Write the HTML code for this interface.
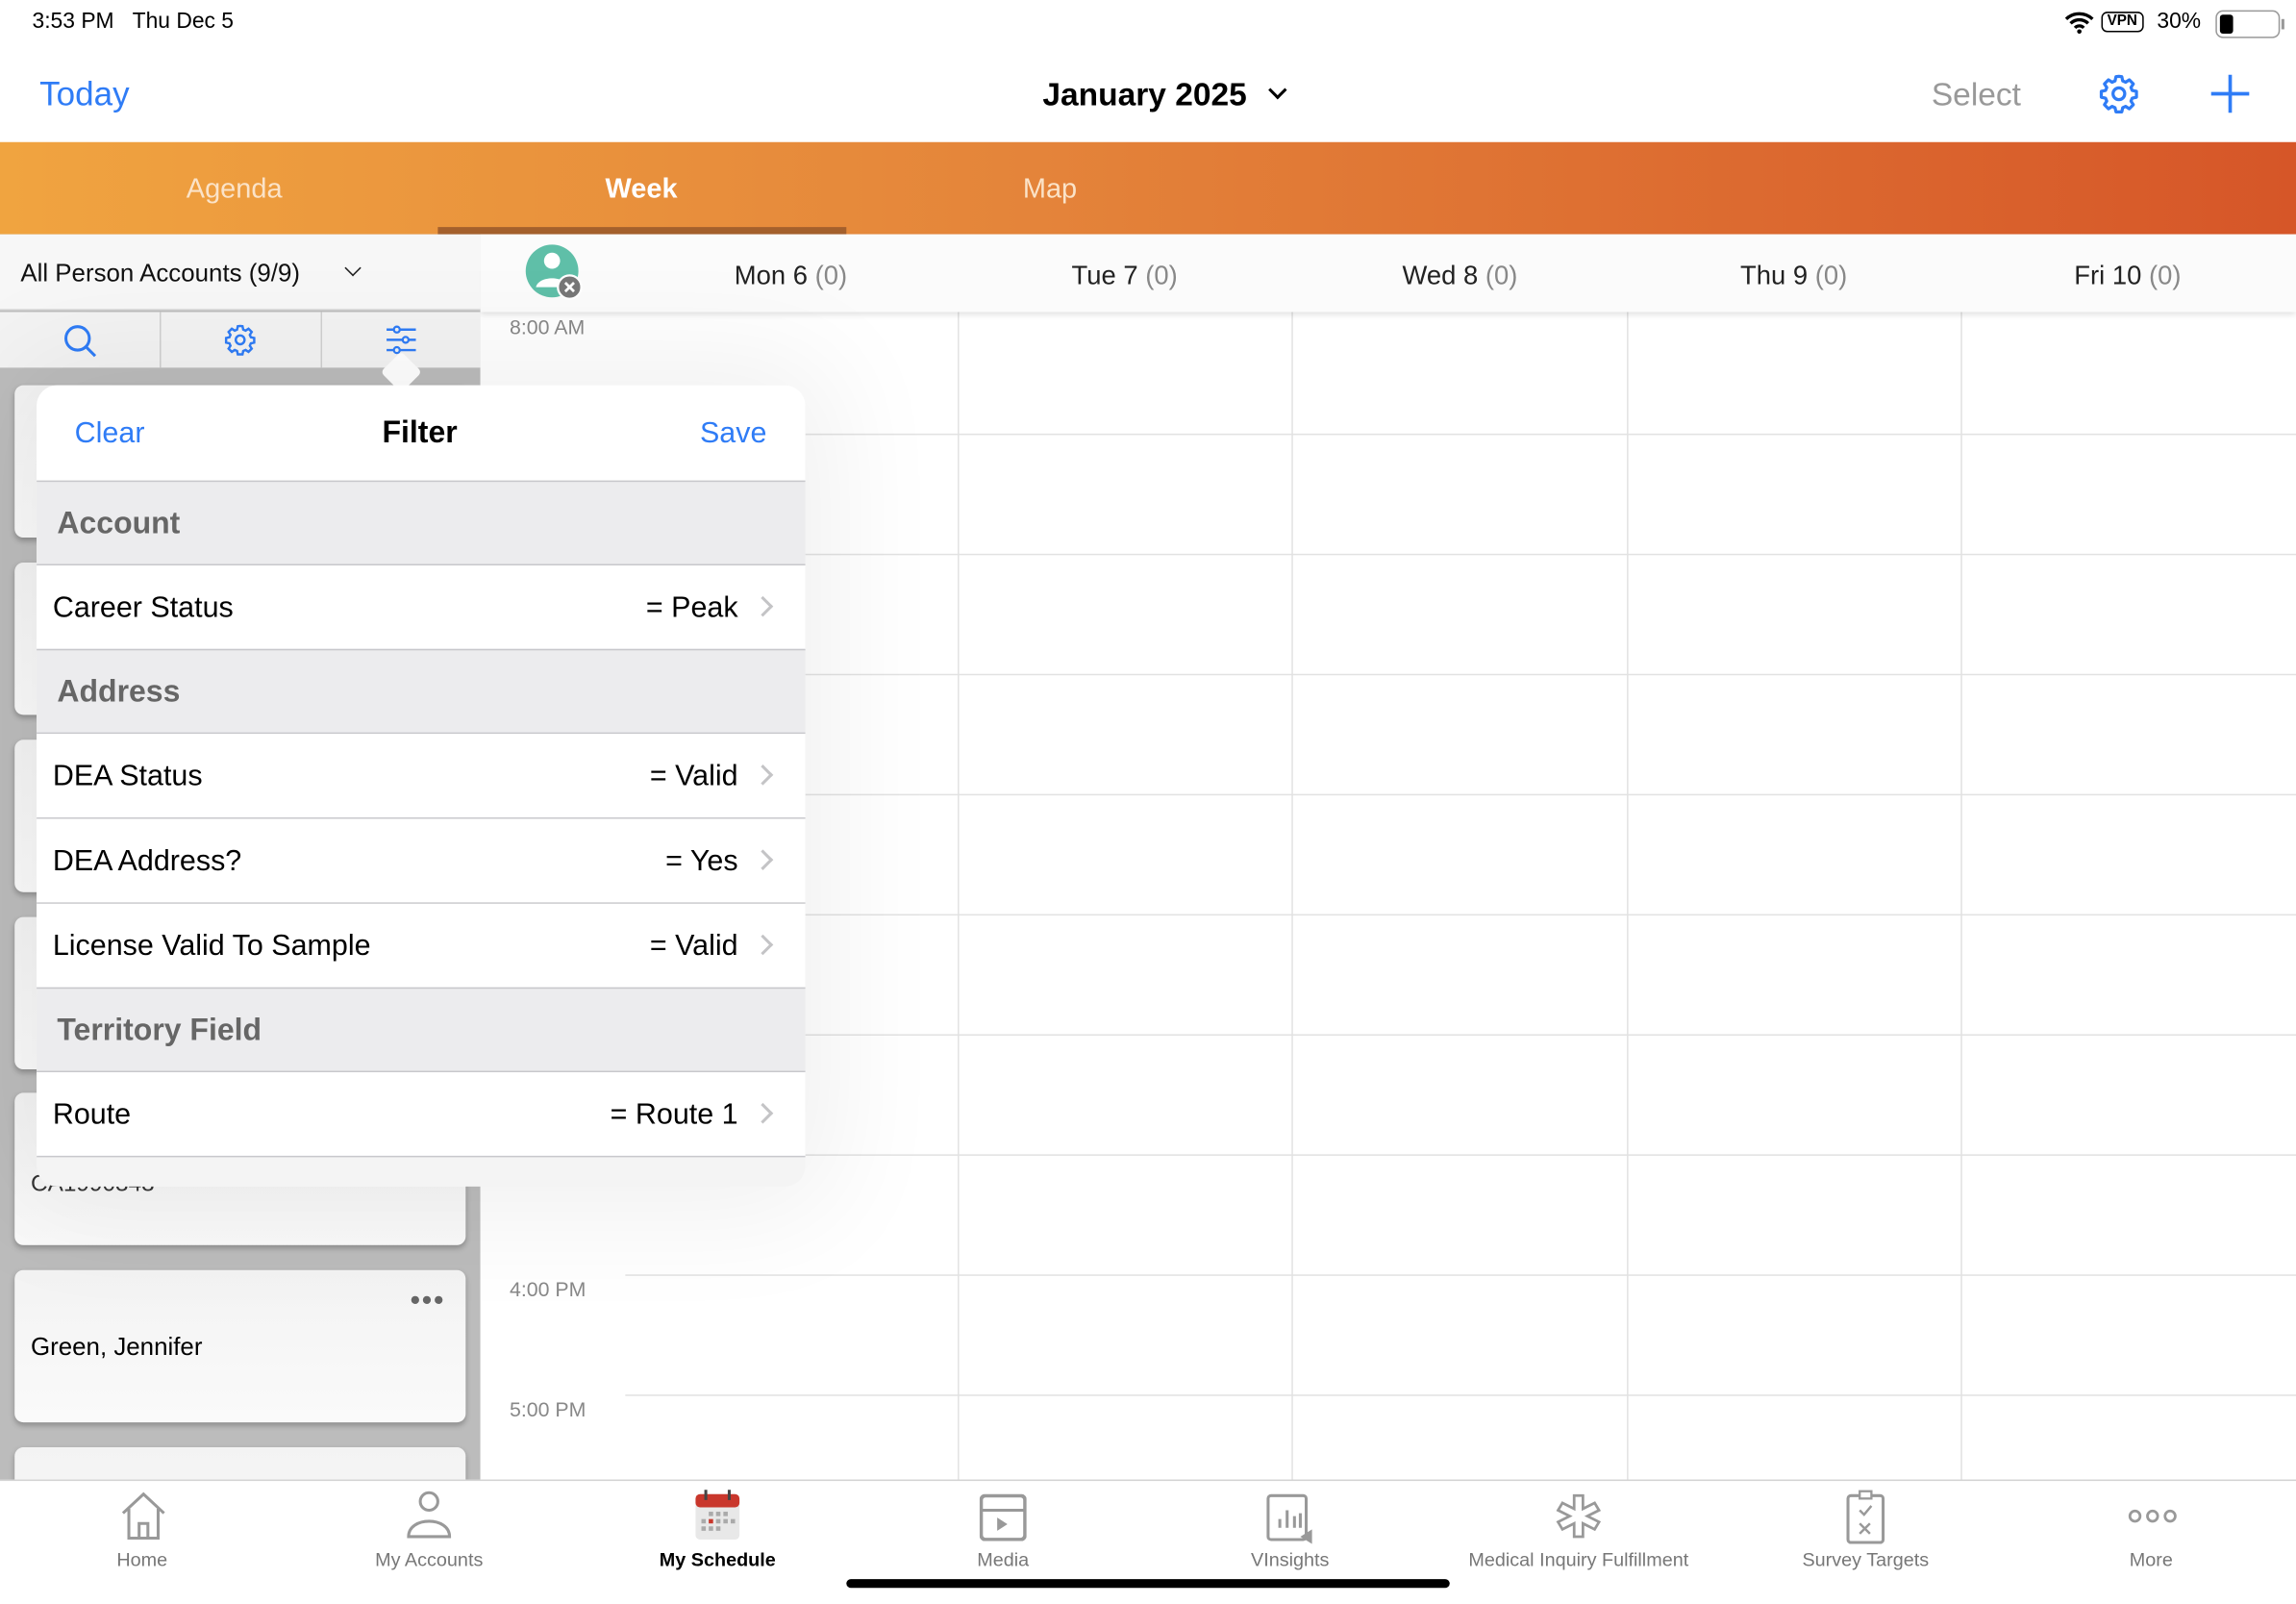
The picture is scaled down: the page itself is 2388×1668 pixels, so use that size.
<!DOCTYPE html>
<html><head><meta charset="utf-8"><style>
*{margin:0;padding:0;box-sizing:border-box}
html,body{width:2388px;height:1668px;overflow:hidden;background:#fff}
#s{position:absolute;left:0;top:0;width:1568px;height:1095px;transform:scale(1.5230,1.5233);transform-origin:0 0;font-family:"Liberation Sans",sans-serif;color:#000}
.a{position:absolute}
.blue{color:#2f7cf6}
.t{white-space:nowrap}
.row{position:absolute;left:0;width:525px;height:58px;border-bottom:1px solid #c8c8cc;background:#fff;font-size:20px}
.row .l{position:absolute;left:11px;top:18px}
.row .r{position:absolute;right:46px;top:18px}
.row .c{position:absolute;right:24px;top:23px;width:10px;height:10px;border-right:2px solid #c4c4c6;border-top:2px solid #c4c4c6;transform:rotate(45deg)}
.sec{position:absolute;left:0;width:525px;height:58px;background:#ececee;border-top:1px solid #c8c8cc;border-bottom:1px solid #c8c8cc;font-size:21px;font-weight:bold;color:#666}
.sec span{position:absolute;left:14px;top:17px}
.card{position:absolute;left:10px;width:308px;height:104px;border-radius:6px;background:linear-gradient(#f3f3f3,#fafafa);box-shadow:0 2px 4px rgba(0,0,0,.25)}
.hl{position:absolute;left:427px;right:0;height:1px;background:#e2e2e2}
.vl{position:absolute;top:213px;height:797px;width:1px;background:#e2e2e2}
.tab{position:absolute;top:1057px;font-size:13px;color:#777;text-align:center;width:190px;white-space:nowrap}
.day{position:absolute;top:178px;font-size:18px;color:#222;white-space:nowrap;text-align:center;width:200px}
.day span{color:#888}
</style></head><body><div id="s">
<div class="a t" style="left:22px;top:6px;font-size:15px">3:53 PM&nbsp;&nbsp;&nbsp;Thu Dec 5</div>
<svg class="a" style="left:1410px;top:8px" width="20" height="15" viewBox="0 0 20 15"><path d="M1 5a13 13 0 0 1 18 0M4 8a8.5 8.5 0 0 1 12 0M7 11a4 4 0 0 1 6 0" stroke="#000" stroke-width="2.2" fill="none"/><circle cx="10" cy="13.5" r="1.5"/></svg>
<div class="a t" style="left:1435px;top:8px;border:1.5px solid #000;border-radius:4px;font-size:10px;font-weight:bold;padding:0 3px;line-height:12px">VPN</div>
<div class="a t" style="left:1473px;top:6px;font-size:15px">30%</div>
<div class="a" style="left:1513px;top:7px;width:47px;height:19px"><div class="a" style="left:0;top:0;width:44px;height:19px;border:1.5px solid #999;border-radius:5px"></div><div class="a" style="left:3px;top:3px;width:9px;height:13px;background:#000;border-radius:2px"></div><div class="a" style="left:45px;top:6px;width:2px;height:7px;background:#999"></div></div>
<div class="a t blue" style="left:27px;top:51px;font-size:23px">Today</div>
<div class="a t" style="left:712px;top:52px;font-size:22px;font-weight:bold">January 2025</div>
<div class="a" style="left:868px;top:57px;width:9px;height:9px;border-right:2px solid #000;border-bottom:2px solid #000;transform:rotate(45deg)"></div>
<div class="a t" style="left:1319px;top:52px;font-size:22px;color:#999">Select</div>
<svg class="a" style="left:1432px;top:49px" width="30" height="30" viewBox="0 0 24 24"><path d="M12 2.5l1.6.2.5 2.3 1.6.7 2-1.3 2.2 2.2-1.3 2 .7 1.6 2.3.5v3.2l-2.3.5-.7 1.6 1.3 2-2.2 2.2-2-1.3-1.6.7-.5 2.3h-3.2l-.5-2.3-1.6-.7-2 1.3-2.2-2.2 1.3-2-.7-1.6-2.3-.5v-3.2l2.3-.5.7-1.6-1.3-2 2.2-2.2 2 1.3 1.6-.7.5-2.3z" fill="none" stroke="#2f7cf6" stroke-width="1.7" stroke-linejoin="round"/><circle cx="12" cy="12" r="3.2" fill="none" stroke="#2f7cf6" stroke-width="1.7"/></svg>
<svg class="a" style="left:1509px;top:50px" width="28" height="28"><path d="M14 1v26M1 14h26" stroke="#2f7cf6" stroke-width="2.4"/></svg>
<div class="a" style="left:0;top:97px;width:1568px;height:63px;background:linear-gradient(90deg,#f0a440,#e4843a 45%,#d65628)"></div>
<div class="a t" style="left:60px;top:119px;width:200px;text-align:center;font-size:19px;color:#fbe3c8">Agenda</div>
<div class="a t" style="left:338px;top:119px;width:200px;text-align:center;font-size:19px;color:#fff;font-weight:bold">Week</div>
<div class="a t" style="left:617px;top:119px;width:200px;text-align:center;font-size:19px;color:#fbe3c8">Map</div>
<div class="a" style="left:299px;top:155px;width:279px;height:5px;background:#a4602c"></div>
<div class="a" style="left:328px;top:160px;width:1240px;height:850px;background:#fff"></div>
<div class="vl" style="left:654px"></div><div class="vl" style="left:882px"></div><div class="vl" style="left:1111px"></div><div class="vl" style="left:1339px"></div>
<div class="hl" style="top:296px"></div><div class="hl" style="top:378px"></div><div class="hl" style="top:460px"></div><div class="hl" style="top:542px"></div><div class="hl" style="top:624px"></div><div class="hl" style="top:706px"></div><div class="hl" style="top:788px"></div><div class="hl" style="top:870px"></div><div class="hl" style="top:952px"></div>
<div class="a t" style="left:348px;top:215px;font-size:14px;color:#888">8:00 AM</div>
<div class="a t" style="left:348px;top:872px;font-size:14px;color:#888">4:00 PM</div>
<div class="a t" style="left:348px;top:954px;font-size:14px;color:#888">5:00 PM</div>
<div class="a" style="left:328px;top:160px;width:1240px;height:53px;background:#fbfbfb;box-shadow:0 2px 4px rgba(0,0,0,.12)"></div>
<svg class="a" style="left:358px;top:166px" width="44" height="40"><circle cx="19" cy="19" r="18" fill="#5fbfa8"/><circle cx="19" cy="12" r="5.5" fill="#fff"/><path d="M8 30c2-8 20-8 22 0z" fill="#fff"/><circle cx="31" cy="30" r="8" fill="#777" stroke="#fff" stroke-width="1.5"/><path d="M28 27l6 6M34 27l-6 6" stroke="#fff" stroke-width="1.8"/></svg>
<div class="day" style="left:440px">Mon 6 <span>(0)</span></div>
<div class="day" style="left:668px">Tue 7 <span>(0)</span></div>
<div class="day" style="left:897px">Wed 8 <span>(0)</span></div>
<div class="day" style="left:1125px">Thu 9 <span>(0)</span></div>
<div class="day" style="left:1353px">Fri 10 <span>(0)</span></div>
<div class="a" style="left:0;top:160px;width:328px;height:850px;background:#bcbcbc"></div>
<div class="a" style="left:0;top:160px;width:328px;height:52px;background:#f7f7f7;border-bottom:1px solid #d0d0d0"></div>
<div class="a t" style="left:14px;top:177px;font-size:17px;color:#111">All Person Accounts (9/9)</div>
<div class="a" style="left:237px;top:179px;width:8px;height:8px;border-right:1.8px solid #222;border-bottom:1.8px solid #222;transform:rotate(45deg)"></div>
<div class="a" style="left:0;top:213px;width:328px;height:38px;background:#f3f3f3"></div>
<div class="a" style="left:109px;top:213px;width:1px;height:38px;background:#d0d0d0"></div>
<div class="a" style="left:219px;top:213px;width:1px;height:38px;background:#d0d0d0"></div>
<svg class="a" style="left:42px;top:220px" width="26" height="26"><circle cx="11" cy="11" r="8" fill="none" stroke="#2f7cf6" stroke-width="2"/><path d="M17 17l6 6" stroke="#2f7cf6" stroke-width="2"/></svg>
<svg class="a" style="left:152px;top:220px" width="24" height="24" viewBox="0 0 24 24"><path d="M12 2.5l1.6.2.5 2.3 1.6.7 2-1.3 2.2 2.2-1.3 2 .7 1.6 2.3.5v3.2l-2.3.5-.7 1.6 1.3 2-2.2 2.2-2-1.3-1.6.7-.5 2.3h-3.2l-.5-2.3-1.6-.7-2 1.3-2.2-2.2 1.3-2-.7-1.6-2.3-.5v-3.2l2.3-.5.7-1.6-1.3-2 2.2-2.2 2 1.3 1.6-.7.5-2.3z" fill="none" stroke="#2f7cf6" stroke-width="1.6"/><circle cx="12" cy="12" r="3" fill="none" stroke="#2f7cf6" stroke-width="1.6"/></svg>
<svg class="a" style="left:262px;top:220px" width="24" height="24"><path d="M2 5h20M2 12h20M2 19h20" stroke="#2f7cf6" stroke-width="1.6"/><circle cx="9" cy="5" r="2" fill="#f3f3f3" stroke="#2f7cf6" stroke-width="1.5"/><circle cx="15" cy="12" r="2" fill="#f3f3f3" stroke="#2f7cf6" stroke-width="1.5"/><circle cx="9" cy="19" r="2" fill="#f3f3f3" stroke="#2f7cf6" stroke-width="1.5"/></svg>
<div class="card" style="top:263px"></div>
<div class="card" style="top:384px"></div>
<div class="card" style="top:505px"></div>
<div class="card" style="top:626px"></div>
<div class="card" style="top:746px"><div class="a t" style="left:11px;top:54px;font-size:16px;color:#333">CA1990343</div></div>
<div class="card" style="top:867px"><div class="a t" style="left:11px;top:43px;font-size:17px">Green, Jennifer</div><div class="a t" style="left:270px;top:10px;font-size:20px;color:#666;letter-spacing:1px">•••</div></div>
<div class="card" style="top:988px"></div>
<div class="a" style="left:264px;top:244px;width:20px;height:20px;background:#fff;transform:rotate(45deg);border-radius:3px"></div>
<div class="a" style="left:25px;top:263px;width:525px;height:547px;background:#f4f4f4;border-radius:14px;overflow:hidden;box-shadow:0 0 80px 20px rgba(0,0,0,.06)">
 <div class="a" style="left:0;top:0;width:525px;height:65px;background:#fff"></div>
 <div class="a t blue" style="left:26px;top:22px;font-size:20px">Clear</div>
 <div class="a t" style="left:236px;top:21px;font-size:21px;font-weight:bold">Filter</div>
 <div class="a t blue" style="left:453px;top:22px;font-size:20px">Save</div>
 <div class="sec" style="top:65px"><span>Account</span></div>
 <div class="row" style="top:123px"><span class="l">Career Status</span><span class="r">= Peak</span><i class="c"></i></div>
 <div class="sec" style="top:180px"><span>Address</span></div>
 <div class="row" style="top:238px"><span class="l">DEA Status</span><span class="r">= Valid</span><i class="c"></i></div>
 <div class="row" style="top:296px"><span class="l">DEA Address?</span><span class="r">= Yes</span><i class="c"></i></div>
 <div class="row" style="top:354px"><span class="l">License Valid To Sample</span><span class="r">= Valid</span><i class="c"></i></div>
 <div class="sec" style="top:411px"><span>Territory Field</span></div>
 <div class="row" style="top:469px"><span class="l">Route</span><span class="r">= Route 1</span><i class="c"></i></div>
</div>
<div class="a" style="left:0;top:1010px;width:1568px;height:85px;background:#fff;border-top:1px solid #d4d4d4"></div>
<svg class="a" style="left:80px;top:1017px" width="36" height="36"><path d="M4 16L18 3l14 13M8 13v20h20V13M15 33v-10h6v10" fill="none" stroke="#999" stroke-width="2"/></svg>
<svg class="a" style="left:276px;top:1016px" width="34" height="36"><circle cx="17" cy="9" r="6" fill="none" stroke="#999" stroke-width="2"/><path d="M3 33c0-14 28-14 28 0z" fill="none" stroke="#999" stroke-width="2"/></svg>
<svg class="a" style="left:474px;top:1016px" width="32" height="36"><rect x="1" y="4" width="30" height="31" rx="3" fill="#e8e8e8"/><rect x="1" y="4" width="30" height="9" rx="3" fill="#c9372c"/><path d="M8 1v7M24 1v7" stroke="#444" stroke-width="2"/><g fill="#aaa"><rect x="10" y="16" width="3" height="3"/><rect x="15" y="16" width="3" height="3"/><rect x="20" y="16" width="3" height="3"/><rect x="5" y="21" width="3" height="3"/><rect x="15" y="21" width="3" height="3"/><rect x="20" y="21" width="3" height="3"/><rect x="25" y="21" width="3" height="3"/><rect x="5" y="26" width="3" height="3"/><rect x="10" y="26" width="3" height="3"/><rect x="15" y="26" width="3" height="3"/></g><rect x="10" y="21" width="3" height="3" fill="#c9372c"/></svg>
<svg class="a" style="left:669px;top:1020px" width="32" height="32"><rect x="1" y="1" width="30" height="30" rx="3" fill="none" stroke="#999" stroke-width="2.5"/><path d="M1 11h30" stroke="#999" stroke-width="2"/><path d="M12 16v9l7-4.5z" fill="#999"/></svg>
<svg class="a" style="left:862px;top:1019px" width="40" height="36"><rect x="4" y="2" width="26" height="30" rx="2" fill="none" stroke="#999" stroke-width="2"/><path d="M12 24v-6M17 24v-12M22 24v-8M26 24v-10" stroke="#999" stroke-width="2"/><path d="M26 30l8-5v10z" fill="#999"/></svg>
<svg class="a" style="left:1062px;top:1019px" width="32" height="32"><path d="M13 2h6v9l8-4 3 5-8 4 8 4-3 5-8-4v9h-6v-9l-8 4-3-5 8-4-8-4 3-5 8 4z" fill="none" stroke="#999" stroke-width="1.8"/></svg>
<svg class="a" style="left:1260px;top:1017px" width="28" height="38"><rect x="2" y="4" width="24" height="32" rx="2" fill="none" stroke="#999" stroke-width="2"/><rect x="10" y="1" width="8" height="5" fill="#fff" stroke="#999" stroke-width="1.5"/><path d="M10 14l3 3 5-6M10 23l7 7M17 23l-7 7" stroke="#999" stroke-width="1.6" fill="none"/></svg>
<svg class="a" style="left:1452px;top:1029px" width="36" height="12"><circle cx="6" cy="6" r="3.5" fill="none" stroke="#999" stroke-width="1.8"/><circle cx="18" cy="6" r="3.5" fill="none" stroke="#999" stroke-width="1.8"/><circle cx="30" cy="6" r="3.5" fill="none" stroke="#999" stroke-width="1.8"/></svg>
<div class="tab" style="left:2px">Home</div>
<div class="tab" style="left:198px">My Accounts</div>
<div class="tab" style="left:395px;color:#000;font-weight:bold">My Schedule</div>
<div class="tab" style="left:590px">Media</div>
<div class="tab" style="left:786px">VInsights</div>
<div class="tab" style="left:983px">Medical Inquiry Fulfillment</div>
<div class="tab" style="left:1179px">Survey Targets</div>
<div class="tab" style="left:1374px">More</div>
<div class="a" style="left:578px;top:1078px;width:412px;height:6px;background:#000;border-radius:3px"></div>
</div></body></html>
